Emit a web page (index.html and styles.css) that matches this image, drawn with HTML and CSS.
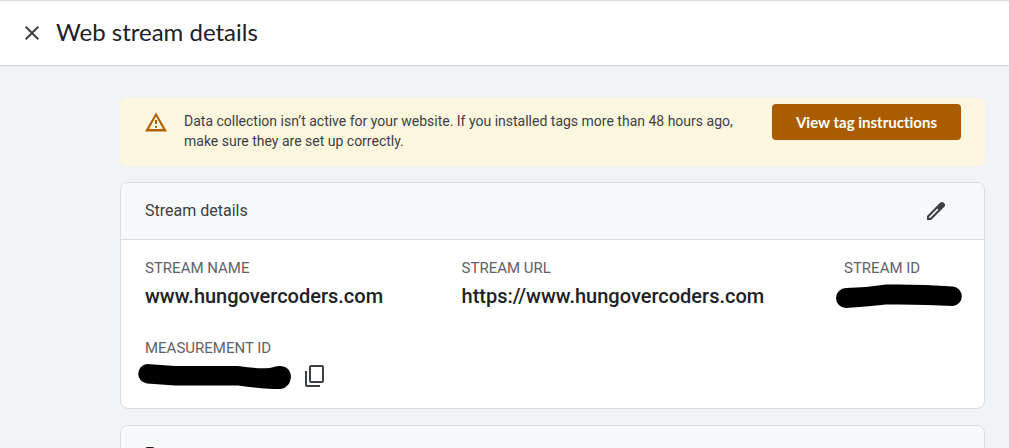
FILE: index.html
```html
<!DOCTYPE html>
<html lang="en">
<head>
<meta charset="utf-8">
<meta name="viewport" content="width=device-width, initial-scale=1">
<title>Web stream details</title>
<link rel="stylesheet" href="styles.css">
</head>
<body>
<header class="topbar">
  <button class="icon-button" type="button" aria-label="Close">
    <svg width="24" height="24" viewBox="0 0 24 24" fill="currentColor"><path d="M19 6.41 17.59 5 12 10.59 6.41 5 5 6.41 10.59 12 5 17.59 6.41 19 12 13.41 17.59 19 19 17.59 13.41 12z"/></svg>
  </button>
  <h1 class="title">Web stream details</h1>
</header>
<main class="content">
  <section class="notice">
    <svg class="notice-icon" width="24" height="24" viewBox="0 0 24 24" fill="currentColor"><path d="M12 5.500 19 18H5L12 5.500M12 1.500 1 20.500h22L12 1.500zm1 13.500h-2v2h2v-2zm0-6h-2v4h2v-4z"/></svg>
    <p class="notice-text">Data collection isn’t active for your website. If you installed tags more than 48 hours ago, make sure they are set up correctly.</p>
    <button class="notice-action" type="button">View tag instructions</button>
  </section>
  <section class="card">
    <div class="card-header">
      <h2 class="card-title">Stream details</h2>
      <button class="icon-button" type="button" aria-label="Edit stream details">
        <svg width="24" height="24" viewBox="0 0 24 24" fill="currentColor"><path fill-rule="evenodd" d="M20.400 4.400 19.600 3.600c-.9-.9-2.400-.9-3.300 0L3 16.900V21h4.100L20.400 7.700c.9-.9.9-2.400 0-3.300zM6.100 19H5v-1.100L13.300 9.600 14.400 10.700z"/></svg>
      </button>
    </div>
    <dl class="fields">
      <div class="field"><dt class="label">STREAM NAME</dt><dd class="value">www.hungovercoders.com</dd></div>
      <div class="field"><dt class="label">STREAM URL</dt><dd class="value">https://www.hungovercoders.com</dd></div>
      <div class="field"><dt class="label">STREAM ID</dt><dd class="value redacted">
        <svg width="128" height="25" viewBox="0 0 128 25" role="img" aria-label="Hidden"><path d="M10 4 30 3 50 .5Q85 0 117 2.500A9.800 9.800 0 0 1 117 22Q85 20 50 20.500L30 22.500 10 24A10 10 0 0 1 10 4z"/></svg>
      </dd></div>
      <div class="field"><dt class="label">MEASUREMENT ID</dt><dd class="value redacted">
        <svg width="154" height="25" viewBox="0 0 154 25" role="img" aria-label="Hidden"><path d="M10 0 38 2H101Q128 6 137 3C145 0 154 3 154 13Q153 23 144 25Q126 25 101 21.500H38L10 19.500A9.800 9.800 0 0 1 10 0z"/></svg>
        <button class="icon-button" type="button" aria-label="Copy measurement ID">
          <svg width="24" height="24" viewBox="0 0 24 24" fill="none" stroke="currentColor" stroke-width="2"><rect x="7" y="2" width="13" height="16" rx="1"/><path d="M3 7v14a1 1 0 0 0 1 1h13"/></svg>
        </button>
      </dd></div>
    </dl>
  </section>
  <section class="card">
    <div class="card-header"><h2 class="card-title strong">Events</h2></div>
  </section>
</main>
</body>
</html>
```
FILE: styles.css
```css
* { box-sizing: border-box; }

body {
  margin: 0;
  height: 100vh;
  overflow: hidden;
  background: #f1f3f4;
  color: #3c4043;
  font-family: Roboto, "Liberation Sans", sans-serif;
}

h1, h2, p, dl, dd { margin: 0; }

button { font: inherit; cursor: pointer; }

svg { display: block; flex: none; }

.icon-button {
  display: flex;
  flex: none;
  padding: 0;
  border: 0;
  background: none;
  color: #3c4043;
}

.topbar {
  display: flex;
  align-items: center;
  gap: 12px;
  height: 66px;
  padding: 0 20px;
  background: #fff;
  border-top: 1px solid #dadce0;
  border-bottom: 1px solid #d0d3d7;
}

.title {
  padding-bottom: 2px;
  font-family: Lato, "Open Sans", sans-serif;
  font-size: 24px;
  font-weight: 400;
  line-height: 28px;
  color: #202124;
}

.content {
  display: flex;
  flex-direction: column;
  gap: 16px;
  padding: 32px 24px 0 120px;
}

.notice {
  display: flex;
  align-items: flex-start;
  padding: 6px 24px 15px;
  border-radius: 8px;
  background: #fef7e0;
  color: #b06000;
}

.notice-icon { margin: 7px 16px 0 0; }

.notice-text {
  flex: 1;
  margin: 7px 16px 0 0;
  font-size: 14px;
  line-height: 20px;
  color: #3c4043;
}

.notice-action {
  height: 36px;
  padding: 0 24px;
  border: 0;
  border-radius: 4px;
  background: #a95d00;
  color: #fff;
  font-family: Lato, sans-serif;
  font-size: 15px;
  font-weight: 700;
  font-variant-ligatures: none;
}

.card {
  overflow: hidden;
  border: 1px solid #dadce0;
  border-radius: 8px;
  background: #fff;
}

.card-header {
  display: flex;
  align-items: center;
  justify-content: space-between;
  height: 57px;
  padding: 0 36px 0 24px;
  border-bottom: 1px solid #dadce0;
  background: #f8f9fb;
}

.card-title {
  font-size: 16px;
  font-weight: 400;
  line-height: 24px;
}

.strong { font-weight: 500; color: #202124; }

.fields {
  display: grid;
  grid-template-columns: 317fr 383fr 120fr;
  row-gap: 28px;
  padding: 18px 20px 18px 24px;
}

.label {
  font-size: 15px;
  line-height: 20px;
  color: #5f6368;
}

.value {
  height: 32px;
  padding-top: 4px;
  font-size: 20px;
  font-weight: 500;
  line-height: 28px;
  color: #202124;
}

.redacted {
  display: flex;
  align-items: center;
  gap: 12px;
  margin-left: -8px;
  color: #000;
}
```
